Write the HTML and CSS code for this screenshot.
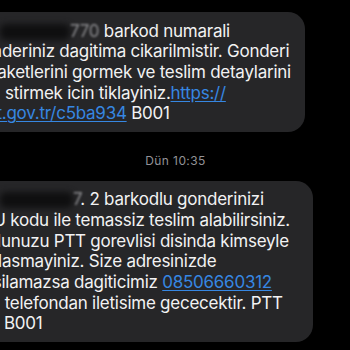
FILE: index.html
```html
<!DOCTYPE html>
<html>
<head>
    <title>Mesajlar</title>
    <link rel="stylesheet" href="styles.css">
</head>
<body>
    <div class="thread">
        <div class="bubble first">
            <div class="line"><span class="redact"></span><span class="smudge">770</span> barkod numarali</div>
            <div class="line cut-gon">gonderiniz dagitima cikarilmistir. Gonderi</div>
            <div class="line cut-pa">paketlerini gormek ve teslim detaylarini</div>
            <div class="line cut-s">stirmek icin tiklayiniz.<a href="#">https://</a></div>
            <div class="line cut-ptt"><a href="#">ptt.gov.tr/c5ba934</a> B001</div>
        </div>

        <div class="stamp">Dün 10:35</div>

        <div class="bubble second">
            <div class="line"><span class="redact short"></span><span class="smudge">7</span>. 2 barkodlu gonderinizi</div>
            <div class="line cut-u">OTU kodu ile temassiz teslim alabilirsiniz.</div>
            <div class="line cut-kod">Kodunuzu PTT gorevlisi disinda kimseyle</div>
            <div class="line cut-payl">paylasmayiniz. Size adresinizde</div>
            <div class="line cut-ulas">ulasilamazsa dagiticimiz <a href="#">08506660312</a></div>
            <div class="line cut-bu">bu telefondan iletisime gececektir. PTT</div>
            <div class="line cut-end">B001</div>
        </div>
    </div>
</body>
</html>
```

FILE: styles.css
```css
* {
    margin: 0;
    padding: 0;
    box-sizing: border-box;
}

body {
    background: #000;
    width: 350px;
    height: 350px;
    overflow: hidden;
    font-family: Inter, "Noto Sans", sans-serif;
}

.thread {
    padding-top: 12px;
}

.bubble {
    background: #262628;
    color: #f2f2f3;
    border-radius: 17px;
    margin-left: -30px;
    padding: 8.5px 0 8px 30px;
    font-size: 17px;
    letter-spacing: -0.25px;
    line-height: 20.7px;
    overflow: hidden;
}

.bubble.first {
    width: 335px;
}

.bubble.second {
    width: 343px;
    padding-top: 8.7px;
    padding-bottom: 7.6px;
}

.line {
    white-space: nowrap;
}

.line a {
    color: #3687e2;
    text-decoration: underline;
    text-underline-offset: 2px;
}

.redact {
    display: inline-block;
    width: 70px;
    height: 16px;
    vertical-align: -3px;
    background: #0f0f10;
    border-radius: 6px;
    filter: blur(3px);
}

.redact.short {
    width: 73px;
}

.smudge {
    color: #8c8c8f;
    filter: blur(1.2px);
}

.cut-gon { text-indent: -28px; }
.cut-pa { text-indent: -13.2px; }
.cut-s { text-indent: 5px; }
.cut-ptt { text-indent: -18.6px; }
.cut-u { text-indent: -29.6px; }
.cut-kod { text-indent: -29.7px; }
.cut-payl { text-indent: -30.7px; }
.cut-ulas { text-indent: -30.3px; }
.cut-bu { text-indent: -19.8px; }
.cut-end { text-indent: 4px; }

.stamp {
    text-align: center;
    color: #929297;
    font-size: 12px;
    letter-spacing: 0.4px;
    line-height: 14px;
    padding: 21.6px 0 12.9px 1px;
}
```
